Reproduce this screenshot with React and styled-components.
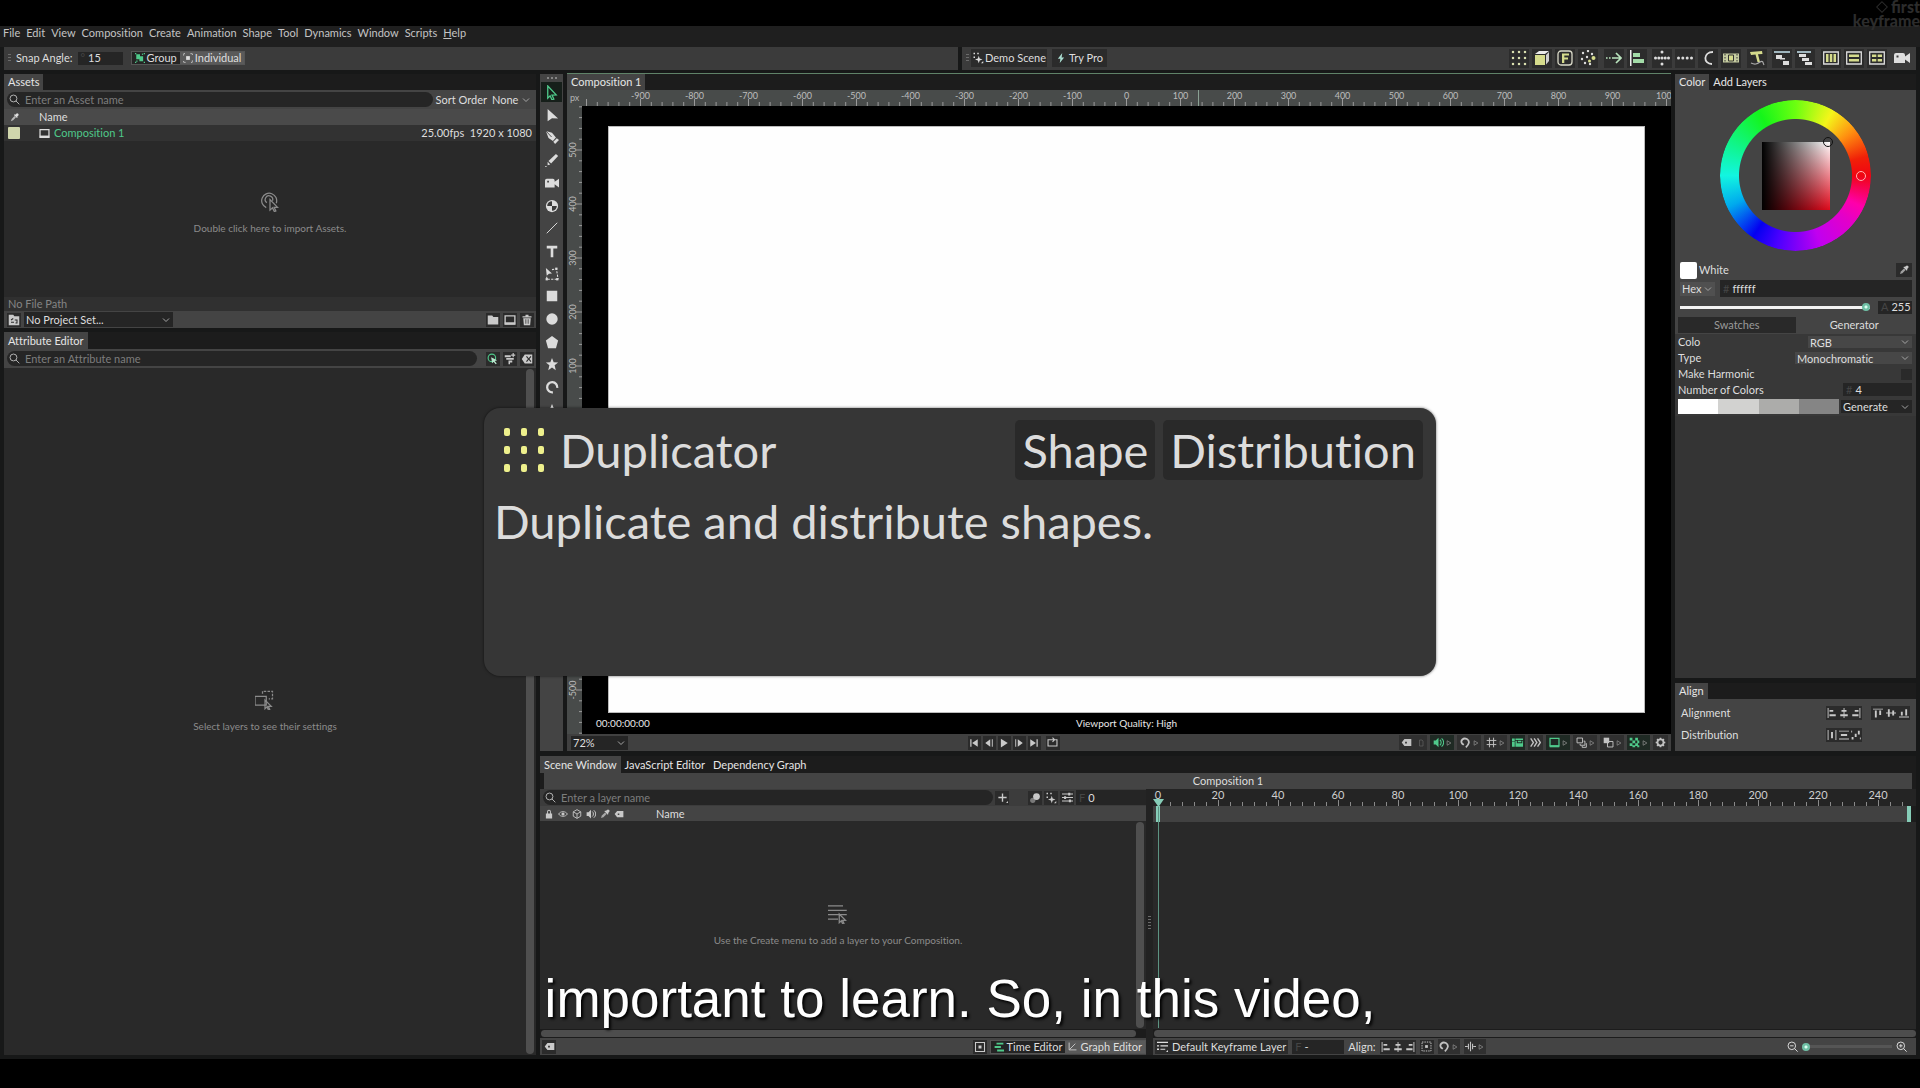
import React from "react";
import styled, { createGlobalStyle, css } from "styled-components";

const c = {
  window: "#171818",
  menu: "#1f1f1f",
  bar: "#3b3b3b",
  panel: "#444444",
  rail: "#1c1c1c",
  well: "#292929",
  field: "#252525",
  text: "#dedede",
  dim: "#8b8b8b",
  green: "#4fc98a",
  teal: "#86cdb8",
  lime: "#d5db8c",
};

const Global = createGlobalStyle`
  *, *::before, *::after { box-sizing: border-box; }
  body { margin: 0; background: #000; color: ${c.text}; font: 11px/14px Lato, "Liberation Sans", sans-serif; font-variant-ligatures: none; }
  button, input, select { font: inherit; color: inherit; margin: 0; padding: 0; border: 0; background: none; border-radius: 0; font-variant-ligatures: none; }
  h2, p { margin: 0; font: inherit; font-variant-ligatures: none; }
`;

/* ---------- frame ---------- */
const Stage = styled.div`
  position: relative;
  display: flex;
  flex-direction: column;
  min-height: 100vh;
  padding: 26px 0 29px;
  background: #000;
  overflow: hidden;
`;
const AppWindow = styled.div`
  flex: 1;
  display: flex;
  flex-direction: column;
  background: ${c.window};
`;
const MenuBar = styled.nav`
  display: flex;
  gap: 6px;
  height: 21px;
  padding: 0 3px;
  background: ${c.menu};
`;
const MenuItem = styled.button`
  color: #c4c4c4;
  line-height: 14px;
  height: 14px;
`;
const Toolbars = styled.div`
  display: flex;
  gap: 4px;
  padding: 0 4px;
`;
const Toolbar = styled.div`
  flex: 1;
  display: flex;
  align-items: center;
  height: 23px;
  padding: 0 4px 1px;
  background: ${c.bar};
`;
const Grip = styled.span`
  width: 3px;
  height: ${(p) => p.$h || 9}px;
  margin-right: ${(p) => p.$after || 0}px;
  background: repeating-linear-gradient(#6b6b6b 0 1px, transparent 1px 3px);
`;
const FieldLabel = styled.label`
  margin-right: ${(p) => p.$after || 0}px;
  white-space: nowrap;
`;
const NumberBox = styled.span`
  display: flex;
  align-items: center;
  gap: 3px;
  width: ${(p) => p.$w}px;
  height: ${(p) => p.$h || 13}px;
  padding-left: 3px;
  background: ${c.field};
  color: #454545;
  input { width: 100%; min-width: 0; color: ${c.text}; outline: 0; }
`;
const Segments = styled.div`
  display: flex;
  margin-left: ${(p) => p.$before || 0}px;
  border: 1px solid #555;
`;
const Segment = styled.button`
  display: flex;
  align-items: center;
  gap: ${(p) => p.$gap || 2}px;
  height: 12px;
  padding: 0 3px;
  white-space: nowrap;
  background: ${(p) => (p.$on ? "#242424" : "#5a5a5a")};
`;
const WordButton = styled.button`
  display: flex;
  align-items: center;
  gap: ${(p) => p.$gap || 1}px;
  height: ${(p) => p.$h || 18}px;
  padding: 0 ${(p) => p.$pad || 1}px;
  margin-right: ${(p) => p.$after || 0}px;
  white-space: nowrap;
  background: #2b2b2b;
`;
const ToolGroups = styled.div`
  display: flex;
  justify-content: space-between;
  width: 403px;
  margin-left: auto;
`;
const ToolGroup = styled.div`
  display: flex;
  gap: 3px;
`;
const ToolButton = styled.button`
  display: grid;
  place-items: center;
  width: 20px;
  height: 19px;
  background: ${(p) => (p.$bare ? "none" : "#2c2c2c")};
`;

/* ---------- panels ---------- */
const Workspace = styled.main`
  flex: 1;
  display: flex;
  gap: 4px;
  padding: 4px;
`;
const LeftColumn = styled.div`
  flex: none;
  display: flex;
  flex-direction: column;
  gap: 4px;
  width: 532px;
`;
const MainColumn = styled.div`
  flex: 1;
  min-width: 0;
  display: flex;
  flex-direction: column;
  gap: 5px;
`;
const Panel = styled.section`
  display: flex;
  flex-direction: column;
  min-width: 0;
  background: ${c.rail};
  ${(p) => p.$grow && css`flex: 1;`}
  ${(p) => p.$h && css`height: ${p.$h}px;`}
`;
const Tabs = styled.div`
  flex: none;
  display: flex;
  height: ${(p) => p.$h || 16}px;
  ${(p) => p.$accent && css`box-shadow: 0 -1px #5f8268;`}
`;
const Tab = styled.button`
  padding: 0 4px;
  line-height: 16px;
  white-space: nowrap;
  color: #e6e6e6;
  background: ${(p) => (p.$on ? c.panel : "none")};
`;
const Row = styled.div`
  flex: none;
  display: flex;
  align-items: center;
  height: ${(p) => p.$h}px;
  gap: ${(p) => p.$gap || 0}px;
  padding: 0 ${(p) => p.$right || 0}px 0 ${(p) => p.$left || 0}px;
  color: ${(p) => p.$tone || "inherit"};
  background: ${(p) => p.$bg || c.panel};
`;
const Search = styled.label`
  flex: 1;
  display: flex;
  align-items: center;
  gap: 5px;
  height: 15px;
  padding-left: 2px;
  border-radius: 8px;
  background: ${c.field};
  color: #b5b5b5;
  input { flex: 1; min-width: 0; outline: 0; }
  input::placeholder { color: #7d7d7d; opacity: 1; }
`;
const SelectWrap = styled.span`
  position: relative;
  display: flex;
  align-items: center;
  width: ${(p) => p.$w}px;
  height: ${(p) => p.$h || 13}px;
  background: ${(p) => p.$bg || c.field};
  margin-left: ${(p) => (p.$end ? "auto" : 0)};
  select { appearance: none; flex: 1; width: 100%; height: 100%; padding-left: 2px; outline: 0; }
  option { background: #333; }
  svg { position: absolute; right: 3px; pointer-events: none; color: #a5a5a5; }
`;
const MiniButton = styled.button`
  display: grid;
  place-items: center;
  flex: none;
  width: ${(p) => p.$w || 14}px;
  height: 14px;
  color: #c9c9c9;
  background: ${(p) => (p.$bare ? "none" : "#2b2b2b")};
`;
const Spacer = styled.span`
  flex: ${(p) => (p.$w ? "none" : 1)};
  width: ${(p) => p.$w || 0}px;
`;
const AssetTable = styled.table`
  width: 100%;
  border-collapse: collapse;
  table-layout: fixed;
  th, td { padding: 0; text-align: left; font-weight: 400; height: 16px; white-space: nowrap; }
  th { background: #4a4a4a; }
  td { background: #323232; }
  td:last-child { text-align: right; padding-right: 4px; }
  svg { display: block; }
`;
const HeadIcon = styled.span`
  display: block;
  padding-left: 6px;
`;
const AssetName = styled.span`
  display: flex;
  align-items: center;
  gap: 4px;
  color: ${c.green};
  svg { color: #ddd; }
`;
const ColorChip = styled.span`
  display: block;
  width: 12px;
  height: 12px;
  margin-left: 4px;
  border-radius: 1px;
  background: #d0d6ac;
`;
const AssetList = styled.div`
  flex: 1;
  display: flex;
  flex-direction: column;
`;
const Well = styled.div`
  flex: 1;
  display: flex;
  min-height: 0;
  background: ${(p) => p.$bg || c.well};
`;
const Empty = styled.div`
  flex: 1;
  display: flex;
  flex-direction: column;
  align-items: center;
  justify-content: center;
  gap: 9px;
  padding-bottom: ${(p) => p.$lift || 0}px;
  font-size: 10px;
  color: ${c.dim};
`;
const ScrollY = styled.div`
  width: 8px;
  margin: 1px 2px 1px 0;
  border-radius: 4px;
  background: #4f4f4f;
`;
const ScrollX = styled.div`
  flex: none;
  height: 7px;
  margin: 1px ${(p) => p.$right || 0}px 1px 1px;
  border-radius: 4px;
  background: #4d4d4d;
`;

/* ---------- middle ---------- */
const Upper = styled.div`
  flex: 1;
  display: flex;
  gap: 4px;
`;
const ToolStrip = styled.div`
  flex: none;
  width: 23px;
  padding-top: 3px;
  background: ${c.panel};
`;
const StripGrip = styled.div`
  width: 10px;
  height: 2px;
  margin: 0 auto 3px;
  background: repeating-linear-gradient(90deg, #858585 0 2px, transparent 2px 4px);
`;
const StripTools = styled.div`
  display: flex;
  flex-direction: column;
  justify-content: space-between;
  align-items: center;
  height: 338px;
`;
const StripButton = styled.button`
  display: grid;
  place-items: center;
  width: 21px;
  height: 20px;
  color: ${(p) => (p.$on ? c.green : "#dcdcdc")};
  background: ${(p) => (p.$on ? "#161f1a" : "none")};
`;
const ViewGrid = styled.div`
  flex: 1;
  display: grid;
  grid-template: 16px 1fr / 15px 1fr;
  min-height: 0;
  background: #484b4a;
  svg { display: block; }
`;
const Corner = styled.span`
  font-size: 9px;
  line-height: 16px;
  padding-left: 3px;
  color: #b5b5b5;
`;
const RulerSvg = styled.svg`
  width: 100%;
  height: 100%;
  overflow: hidden;
  text { font-size: 9px; fill: #bdbdbd; text-anchor: middle; }
`;
const View = styled.div`
  display: flex;
  flex-direction: column;
  padding: 20px 26px 0;
  background: #000;
`;
const Canvas = styled.div`
  flex: 1;
  background: #fefefe;
  border: 1px solid #bbb;
`;
const ViewStatus = styled.div`
  display: grid;
  grid-template-columns: 1fr auto 1fr;
  height: 21px;
  margin: 0 -12px;
  font-size: 10px;
  line-height: 21px;
  color: #e8e8e8;
`;
const Transport = styled.div`
  display: flex;
  gap: 2px;
`;
const ViewControls = styled.div`
  display: flex;
  justify-content: space-between;
  align-items: center;
  height: 17px;
  padding: 0 3px 0 4px;
  background: #404040;
`;
const Toggles = styled.div`
  display: flex;
  justify-content: flex-end;
  gap: 3px;
`;
const ToggleButton = styled.button`
  display: flex;
  align-items: center;
  justify-content: center;
  gap: ${(p) => p.$gap || 2}px;
  width: ${(p) => p.$w || 15}px;
  height: 15px;
  color: ${(p) => (p.$on ? c.green : "#c2c2c2")};
  background: ${(p) => (p.$on ? "#1f2a24" : "#303030")};
  svg + svg { color: #8d8d8d; }
`;

/* ---------- right column ---------- */
const Inspector = styled.div`
  flex: none;
  display: flex;
  flex-direction: column;
  gap: 5px;
  width: 241px;
`;
const WheelArea = styled.div`
  display: grid;
  place-items: center;
  height: 171px;
  background: ${c.panel};
`;
const Wheel = styled.div`
  position: relative;
  display: grid;
  place-items: center;
  width: 151px;
  height: 151px;
`;
const Hue = styled.div`
  grid-area: 1 / 1;
  width: 151px;
  height: 151px;
  border-radius: 50%;
  background: conic-gradient(from 90deg, #f00512, #f0a 25deg, #e400c8 40deg, #c000f0 70deg, #4a00ff 105deg, #0400f0 125deg, #0ae 155deg, #12f5e0 180deg, #10f590 205deg, #14f51a 240deg, #6bff10 270deg, #f4f51a 300deg, #ff9010 322deg, #f02008 345deg, #f00512);
  mask: radial-gradient(circle, transparent 56px, #000 57px);
`;
const Shade = styled.div`
  grid-area: 1 / 1;
  width: 68px;
  height: 68px;
  background: linear-gradient(90deg, #000, transparent), linear-gradient(#fff, #e00a1c);
`;
const Marker = styled.span`
  position: absolute;
  left: ${(p) => p.$x}px;
  top: ${(p) => p.$y}px;
  width: 10px;
  height: 10px;
  border: 1px solid ${(p) => p.$tone};
  border-radius: 50%;
`;
const WhiteSwatch = styled.span`
  width: 17px;
  height: 17px;
  border-radius: 2px;
  background: #fff;
`;
const Range = styled.input`
  appearance: none;
  flex: ${(p) => (p.$w ? "none" : 1)};
  width: ${(p) => p.$w || 100}px;
  min-width: 0;
  height: 10px;
  outline: 0;
  background: linear-gradient(${(p) => p.$track}, ${(p) => p.$track}) center / 100% 3px no-repeat;
  &::-webkit-slider-thumb {
    appearance: none;
    width: 8px;
    height: 8px;
    border-radius: 50%;
    background: radial-gradient(circle, #d8fff0 1px, #6fbfa5 2px);
  }
`;
const HalfTab = styled.button`
  flex: 1;
  height: 16px;
  color: ${(p) => (p.$on ? "#dcdcdc" : "#9a9a9a")};
  background: ${(p) => (p.$on ? c.panel : "#292929")};
`;
const Check = styled.input`
  appearance: none;
  width: 11px;
  height: 11px;
  margin-left: auto;
  background: #2a2a2a;
`;
const Palette = styled.div`
  display: flex;
  flex: 1;
  height: 15px;
`;
const PaletteColor = styled.span`
  flex: 1;
  background: ${(p) => p.$color};
`;
const IconSet = styled.div`
  display: flex;
  margin-left: ${(p) => p.$before || 0}px;
  background: #262626;
`;
const AlignName = styled.span`
  width: 145px;
`;

/* ---------- scene ---------- */
const SceneTitle = styled.div`
  flex: none;
  height: 16px;
  margin: 0 4px;
  line-height: 16px;
  text-align: center;
  background: ${c.panel};
`;
const SceneSplit = styled.div`
  flex: 1;
  display: flex;
  min-height: 0;
`;
const Layers = styled.div`
  flex: none;
  display: flex;
  flex-direction: column;
  width: 606px;
`;
const Splitter = styled.div`
  display: grid;
  place-items: center;
  flex: none;
  width: 7px;
  background: #222;
`;
const Timeline = styled.div`
  position: relative;
  flex: 1;
  min-width: 0;
  display: flex;
  flex-direction: column;
`;
const TimeRuler = styled.div`
  flex: none;
  height: 17px;
  background: #242424;
  svg { display: block; }
  text { font-size: 11px; fill: #cfcfcf; }
`;
const WorkArea = styled.div`
  flex: none;
  display: flex;
  justify-content: space-between;
  height: 16px;
  margin-right: 5px;
  padding-left: 3px;
  background: #414141;
`;
const Handle = styled.span`
  width: 4px;
  background: ${c.teal};
`;
const Playhead = styled.div`
  position: absolute;
  left: 5px;
  top: 16px;
  bottom: 27px;
  width: 1px;
  background: #5d9382;
`;
const PlayheadTip = styled.span`
  position: absolute;
  left: 0;
  top: 10px;
  width: 11px;
  height: 8px;
  background: ${c.teal};
  clip-path: polygon(0 0, 100% 0, 50% 100%);
`;

/* ---------- overlays ---------- */
const Card = styled.aside`
  position: absolute;
  top: 408px;
  left: 50%;
  transform: translateX(-50%);
  width: 952px;
  height: 268px;
  padding: 12px 13px 0 10px;
  border-radius: 16px;
  background: #363636;
  box-shadow: 0 0 3px rgba(0, 0, 0, 0.6);
  color: #dcdcdc;
  font-size: 47px;
  line-height: 60px;
`;
const CardHead = styled.div`
  display: flex;
  align-items: center;
  gap: 8px;
  svg { margin: 0 6px 0 8px; }
`;
const CardTitle = styled.h2`
  flex: 1;
`;
const Tag = styled.span`
  padding: 0 7px;
  border-radius: 5px;
  background: #292929;
`;
const CardText = styled.p`
  margin-top: 11px;
`;
const Caption = styled.p`
  position: absolute;
  left: 0;
  right: 0;
  bottom: 59px;
  text-align: center;
  font: 53px/60px "Liberation Sans", Arial, sans-serif;
  color: #fff;
  text-shadow: 2px 2px 3px #000;
  pointer-events: none;
`;
const Watermark = styled.div`
  position: absolute;
  top: 0;
  right: 0;
  display: grid;
  justify-items: end;
  font: 900 16px/14px Lato, sans-serif;
  color: #2c2c2c;
`;
const WatermarkLine = styled.span`
  display: flex;
  align-items: center;
  gap: 3px;
`;

/* ---------- icons, drawn on a 16 unit grid ---------- */
const L = c.lime;
const S = { fill: "none", stroke: "currentColor", strokeWidth: 1.4 };
const dots = (pts, r = 1, fill) => pts.map(([x, y]) => <rect key={`${x}-${y}`} x={x - r} y={y - r} width={r * 2} height={r * 2} fill={fill} />);
const nine = [2, 8, 14].flatMap((y) => [2, 8, 14].map((x) => [x, y]));
const art = {
  search: <g {...S}><circle cx="6.5" cy="6.5" r="5" /><path d="M10 10l5 5" /></g>,
  dropper: <g><path d="M14.5 1.5a2.4 2.4 0 00-3.4 0L9.3 3.3 8.3 2.3 7 3.600l5.400 5.400 1.300-1.300-1-1 1.800-1.800a2.400 2.400 0 000-3.400z" /><path d="M8 5.500L3 10.500 1.500 14.500 5.500 13l5-5z" opacity=".75" /></g>,
  chevron: <path d="M2 5l6 6 6-6" {...S} strokeWidth="2" />,
  comp: <g><path d="M1.500 2.500h13v11h-13z" {...S} strokeWidth="1.800" /><path d="M1 11h14v3H1z" /></g>,
  folder: <path d="M1 2h6l1.500 2H15v10H1z" />,
  project: <g><path d="M1 1h6l1.500 2H15v12H1z" /><path d="M4 8l3-2M4 11h4M9 8h3v4h-2" stroke="#2b2b2b" fill="none" strokeWidth="1.400" /></g>,
  trash: <g><path d="M2 3h12v1.600H2zM6 1h4v2H6z" /><path d="M3 5.500h10L12.200 15H3.800zM6 7v6h1V7zM9 7v6h1V7z" fillRule="evenodd" /></g>,
  click: <g><circle cx="6.500" cy="6.500" r="5" fill="none" stroke={c.green} strokeWidth="1.500" /><path d="M5.500 5.500l8 4-3.200 1 2.700 3.500-1.500 1-2.600-3.500-2 2z" fill="#b9e6ce" /></g>,
  filterAdd: <path d="M1 3h8v2.500H1zM3 6.500h10V9H3zM6 10h5v2.500H8V15H6zM11.500 0H13v5.500h-1.500zM9.500 2H15v1.500H9.500z" />,
  clear: <path d="M5 2h10v12H5L1 8zm1.700 3l2.600 3-2.600 3 1.200 1 2.400-2.900L12.700 12l1.100-1-2.500-3 2.500-3-1.100-1-2.400 2.900L7.900 4z" fillRule="evenodd" />,
  tag: <path d="M5 3h10v10H5L1 8zm1 4v2.500h2.500V7z" fillRule="evenodd" />,
  slot: <path d="M5 2h5l2 2v10H5z" fill="none" stroke="#626262" strokeWidth="1.400" />,
  groupMode: <g fill={c.green}><path d="M2 2h6v3h5v8H7v-3H2z" />{dots([[1, 1], [15, 1], [1, 15], [15, 15], [12, 2], [3, 13]], 1, c.green)}</g>,
  single: <g><path d="M5 5h6v6H5z" /><path d="M1 4V1h3M12 1h3v3M15 12v3h-3M4 15H1v-3" {...S} strokeDasharray="2 1" /></g>,
  spark: <g>{dots([[3, 2], [8, 2], [3, 7]], 1)}<path d="M9 5l1.200 3.800L14 10l-3.800 1.200L9 15l-1.200-3.800L4 10l3.800-1.200z" /><path d="M12 15h3v-3z" /></g>,
  bolt: <path d="M10 0L3 9h4l-1 7 7-9H9z" fill="#a9dcd0" />,
  dupe: <g>{dots(nine, 1.100, "#d9dfaf")}</g>,
  cube: <g><path d="M1 5h10v10H1z" fill={L} /><path d="M1 4l4-3h10l-4 3z" fill="#e9e9e9" /><path d="M12 5l3-3v9l-3 3.500z" fill="#cfcfcf" /></g>,
  forge: <g><rect x="1" y="1" width="14" height="14" rx="3" fill="none" stroke="#d9d9c8" strokeWidth="1.300" /><path d="M5 3.500h7v2H7.300v2H11v2H7.300V13H5z" fill={L} /></g>,
  scatter: <g fill="#ddd">{[[3, 3], [8, 1], [2, 9], [7, 7], [5, 13], [12, 4], [10, 14]].map(([x, y]) => <circle key={x} cx={x} cy={y} r="1.200" />)}<circle cx="13.500" cy="8" r="2" fill={L} /><circle cx="9.500" cy="11" r="1.500" fill={L} /></g>,
  arrow: <g fill="none" stroke="#b9e3bd" strokeWidth="1.700"><path d="M0 8h6" strokeDasharray="1.600 1.400" /><path d="M6 8h8M10 3l5 5-5 5" /></g>,
  bars: <g><path d="M1 0h1.500v16H1z" fill="#eee" /><path d="M4 3h7v4H4zM4 9h11v4H4z" fill="#a3dca8" /></g>,
  cross: <g fill="#ddd">{[[8, 2], [8, 14], [1.500, 8], [14.500, 8], [8, 8], [4.800, 8], [11.200, 8]].map(([x, y]) => <circle key={`${x}-${y}`} cx={x} cy={y} r="1.500" />)}</g>,
  ellipsis: <g fill="#ddd">{[1.500, 5.800, 10.200, 14.500].map((x) => <circle key={x} cx={x} cy="8" r="1.500" />)}</g>,
  arc: <path d="M13 2C3 2 3 14 12 14" fill="none" stroke="#ddd" strokeWidth="1.800" />,
  strip: <g><path d="M0 3.500h16v9H0z" fill="#c5cba0" /><path d="M5.500 5h5v6h-5z" fill={L} stroke="#333" /><path d="M2 4v8M14 4v8" stroke="#333" strokeDasharray="1.500 1.500" /></g>,
  textPath: <g><path d="M1 2l12-1 .5 3-4.500.3L11 12H8.500L6.500 4.600 2 5z" fill={L} /><path d="M2 13c4 2 6 1 9-1s3 1 4 3" fill="none" stroke="#aaa" strokeWidth="1.200" /></g>,
  stagger: <g><path d="M0 1h16v2H0z" fill="#9fb5bd" /><path d="M2 5h6v4H2zM9 11h6v4H9zM6 8h5v1.500H6z" fill="#ddd" /></g>,
  stairs: <g><path d="M0 1h14v2H0z" fill="#9fb5bd" /><path d="M2 4h7v3H2zM5 8h7v3H5zM8 12h7v3H8z" fill="#ddd" /></g>,
  cols: <g><path d="M.7 2h14.600v12H.7z" fill="none" stroke="#ddd" strokeWidth="1.300" /><path d="M3 4h2.500v8H3zM6.800 4h2.500v8H6.800zM10.500 4H13v8h-2.500z" fill={L} /></g>,
  rows: <g><path d="M.7 2h14.600v12H.7z" fill="none" stroke="#ddd" strokeWidth="1.300" /><path d="M3 4.500h10V7H3zM3 9h10v2.500H3z" fill={L} /></g>,
  grid: <g><path d="M.7 2h14.600v12H.7z" fill="none" stroke="#ddd" strokeWidth="1.300" /><path d="M3 4.500h4.300V7H3zM3 9h4.300v2.500H3zM8.700 4.500H13V7H8.700zM8.700 9H13v2.500H8.700z" fill={L} /></g>,
  camera: <path d="M0 5a2 2 0 012-2h7a2 2 0 012 2v1.500L16 3v10l-5-3.500V13H0zM2.500 5.500v2h2v-2z" fillRule="evenodd" />,
  pick: <path d="M4 1l9 9.500-4.500.3L10.500 15l-2 .8L6.500 11.500 4 14z" {...S} />,
  direct: <path d="M3 1l12 11-7-.3L3 15z" />,
  pen: <g><path d="M1 1l7 2 4.500 5.500-3.500 4L4 9z" /><path d="M1 1l6.500 7" stroke="#444" strokeWidth="1" /><path d="M13.500 9.500l2.500 2-4.500 4.500-2-2.500z" /></g>,
  pencil: <g><path d="M12.500 1L15 3.500 7 12l-3-3z" /><path d="M3 10l3 3-3 1zM0 15h2v1H0z" /></g>,
  pie: <g><circle cx="8" cy="8" r="7" /><path d="M8 2.500V8H2.500A5.500 5.500 0 018 2.500zM8 13.500V8h5.500A5.500 5.500 0 018 13.500z" fill="#3a3a3a" /></g>,
  line: <path d="M2 14L14 2" {...S} strokeWidth="1.100" />,
  type: <path d="M2 2h12v3H9.500v10h-3V5H2z" />,
  lasso: <g><path d="M1 1l7 6.500-3.500.2L2 10z" /><path d="M8 3l5-1 2 12M2 11v3h12" {...S} strokeDasharray="2.500 1.500" strokeWidth="1.200" />{dots([[13, 2], [2, 14], [14, 14]], 1.300)}</g>,
  square: <path d="M2 2h12v12H2z" />,
  disc: <circle cx="8" cy="8" r="6.500" />,
  pentagon: <path d="M8 1l7 5.300L12.500 15h-9L1 6.300z" />,
  star: <path d="M8 1l1.900 4.900L15 6.200l-4 3.300L12.300 15 8 12l-4.300 3L5 9.500 1 6.200l5.100-.3z" />,
  ring: <path d="M9 14A5.800 5.800 0 1114 9" fill="none" stroke="currentColor" strokeWidth="2.600" />,
  flare: <path d="M8 1l2 5 5 2-5 2-2 5-2-5-5-2 5-2z" />,
  first: <path d="M2 2h2v12H2zM14 2v12L5 8z" />,
  back: <path d="M12.500 2H14v12h-1.500zM10 2v12L2 8z" />,
  play: <path d="M3 1l11 7-11 7z" />,
  fwd: <path d="M2 2h1.500v12H2zM6 2v12l8-6z" />,
  last: <path d="M12 2h2v12h-2zM2 2v12l9-6z" />,
  loop: <path d="M5 4H1.500v9h13V4H12M5 4h5M8 1l3 3-3 3" {...S} strokeWidth="1.600" />,
  tri: <path d="M3 2l10 6-10 6z" {...S} strokeWidth="2" />,
  sound: <g><path d="M1 5h3l4-4v14l-4-4H1z" /><path d="M10 4c2.500 2 2.500 6 0 8M12.500 2c4 3.500 4 8.500 0 12" {...S} strokeWidth="1.600" /></g>,
  magnet: <g><path d="M5.500 11.500L3 9.500C0 5 5 .5 10 3c5 3 3 8-1.500 12" fill="none" stroke="currentColor" strokeWidth="2.600" /></g>,
  hash: <path d="M5 1v14M11 1v14M1 5h14M1 11h14" {...S} />,
  overlay: <path d="M0 2h4v4H0zM5 2h11v2.500H5zM0 7h4v7H0zM5 5.500h2V9h8V5.500h1V14H5zM8.500 5.500h5v2h-5z" />,
  fast: <path d="M1 2l4 6-4 6M6 2l4 6-4 6M11 2l4 6-4 6" {...S} strokeWidth="2" />,
  frame: <g><path d="M1.500 2h13v11h-13z" {...S} strokeWidth="1.800" /><path d="M1 12h14v3H1z" /></g>,
  layers: <g><path d="M1.500 1.500h8v7h-8z" {...S} /><path d="M6 10v2h7V6h-2M9 13v2h6V9" {...S} /></g>,
  mask: <g><path d="M1 1h8v8H1z" /><path d="M6.500 6.500h8v8h-8z" {...S} /></g>,
  checker: <path d="M1 1h4v4H1zM9 1h4v4H9zM5 5h4v4H5zM12 5h3v4h-3zM1 9h4v4H1zM9 9h4v4H9zM5 12h4v3H5zM12 12h3v3h-3z" />,
  gear: <g><circle cx="8" cy="8" r="4.400" fill="none" stroke="currentColor" strokeWidth="2.600" /><path d="M8 1v2M8 13v2M1 8h2M13 8h2M3 3l1.500 1.500M11.500 11.500L13 13M3 13l1.500-1.500M11.500 4.500L13 3" {...S} strokeWidth="2.400" /></g>,
  plus: <g><path d="M7 2h2v5h5v2H9v5H7V9H2V7h5z" /><path d="M13 16h3v-3z" /></g>,
  blur: <g><circle cx="10" cy="6" r="4.500" /><circle cx="5" cy="11" r="3.500" opacity=".5" /></g>,
  sliders: <g><path d="M0 3h16M0 8h16M0 13h16" {...S} strokeWidth="1.600" /><path d="M9 1h3v4H9zM3 6h3v4H3zM10 11h3v4h-3z" /></g>,
  lock: <path d="M3 7h10v8H3zM5 7V4a3 3 0 016 0v3H9.600V4.500a1.600 1.600 0 00-3.200 0V7z" />,
  eye: <g><path d="M1 8c3-5 11-5 14 0-3 5-11 5-14 0z" {...S} /><circle cx="8" cy="8" r="2.500" /></g>,
  box: <path d="M8 1l6 3.500v7L8 15l-6-3.500v-7zM2 4.500L8 8l6-3.500M8 8v7" {...S} />,
  dotbox: <g><path d="M2 2h12v12H2z" {...S} /><path d="M6 6h4v4H6z" /></g>,
  timeBars: <path d="M4 1h11v3H4zM1 6.500h10v3H1zM5 12h11v3H5z" fill={c.green} />,
  graph: <path d="M2 1v13h13M3 13L13 3" {...S} />,
  keyLayer: <g><path d="M0 2h16M5 7h11M5 12h7" {...S} strokeWidth="1.800" /><path d="M0 6h3v2H0zM0 11h3v2H0zM13 16h3v-3z" /></g>,
  alignL: <path d="M1 0h1.500v16H1zM4 3h6v3H4zM4 10h10v3H4z" />,
  alignC: <path d="M7.300 0h1.500v16H7.300zM4 3h8v3H4zM2 10h12v3H2z" />,
  alignR: <path d="M13.500 0H15v16h-1.500zM6 3h6v3H6zM2 10h10v3H2z" />,
  alignT: <path d="M0 1h16v1.500H0zM3 4h3v11H3zM10 4h3v7h-3z" />,
  alignM: <path d="M0 7.300h16v1.500H0zM3 2h3v12H3zM10 4h3v8h-3z" />,
  alignB: <path d="M0 13.500h16V15H0zM10 2h3v10h-3zM3 6h3v6H3z" />,
  distH: <path d="M1 0h1.500v16H1zM13.500 0H15v16h-1.500zM6.500 3h3v10h-3z" />,
  distV: <path d="M0 1h16v1.500H0zM0 13.500h16V15H0zM3 6.500h10v3H3z" />,
  distD: <g><path d="M1 1v3M15 12v3" {...S} /><path d="M1 11h3v4H1zM6 6h3v5H6zM11 1h3v6h-3z" /></g>,
  bounds: <g><path d="M1.500 1.500h13v13h-13z" {...S} strokeDasharray="2 1.500" /><path d="M6 6h4v4H6z" /></g>,
  ripple: <path d="M0 8h4M5 4v8M8 1v14M11 4v8M12 8h4" {...S} strokeWidth="1.600" />,
  zoomOut: <g {...S}><circle cx="7" cy="7" r="5.500" /><path d="M11 11l4.500 4.500M4.500 7h5" /></g>,
  zoomIn: <g {...S}><circle cx="7" cy="7" r="5.500" /><path d="M11 11l4.500 4.500M4.500 7h5M7 4.500v5" /></g>,
  clickHere: <g {...S} strokeWidth="1"><path d="M5 12.500A6 6 0 1113 9" /><path d="M5.500 8.500A3 3 0 1110 7" /><path d="M8 6v8.500l2-1.800 1.500 3 1.200-.6-1.400-2.900H14z" /></g>,
  selectHere: <g {...S} strokeWidth="1"><path d="M0 5h9v7H0z" /><path d="M6 3V1h8v6h-3" strokeDasharray="2 1" /><path d="M8 8v7l1.600-1.500 1.200 2.500 1-.5-1.200-2.400H13z" /></g>,
  listHere: <g {...S} strokeWidth="1"><path d="M0 1.500h12M0 5h15M0 8.500h15M0 12h8" /><path d="M9 8v7l1.600-1.500 1.200 2.500 1-.5-1.200-2.400H14z" /></g>,
  diamond: <path d="M8 1l7 7-7 7-7-7z" {...S} />,
};
const Icon = ({ n, s = 12 }) => (
  <svg width={s} height={s} viewBox="0 0 16 16" fill="currentColor" aria-hidden="true">{art[n]}</svg>
);

/* ---------- rulers ---------- */
const SCALE = 0.54;
const steps = Array.from({ length: 103 }, (_, i) => (i - 51) * 20);
const RulerX = () => (
  <RulerSvg>
    <svg x="50%" overflow="visible">
      {steps.map((v) => (
        <path key={v} d={`M${v * SCALE} ${v % 100 ? 12 : 9}V16`} stroke="#9a9a9a" />
      ))}
      {steps.filter((v) => v % 100 === 0 && v > -1000).map((v) => (
        <text key={v} x={v * SCALE} y="9">{v}</text>
      ))}
      <path d="M72 0V16" stroke="#8aa193" />
    </svg>
  </RulerSvg>
);
const RulerY = () => (
  <RulerSvg>
    <svg y="50%" overflow="visible">
      {steps.filter((v) => Math.abs(v) < 600).map((v) => (
        <path key={v} d={`M${v % 100 ? 12 : 9} ${-v * SCALE}H15`} stroke="#9a9a9a" />
      ))}
      {steps.filter((v) => v % 100 === 0 && Math.abs(v) < 600).map((v) => (
        <text key={v} transform={`translate(9 ${-v * SCALE}) rotate(-90)`}>{v}</text>
      ))}
    </svg>
  </RulerSvg>
);
const frames = Array.from({ length: 63 }, (_, i) => i * 4);
const FrameRuler = () => (
  <TimeRuler>
    <svg width="100%" height="17">
      {frames.map((f) => (
        <path key={f} d={`M${f * 3 + 5.5} ${f % 20 ? 13 : 11}V17`} stroke="#8a8a8a" />
      ))}
      {frames.filter((f) => f % 20 === 0).map((f) => (
        <text key={f} x={f * 3 + 5} y="10" textAnchor="middle">{f}</text>
      ))}
    </svg>
  </TimeRuler>
);

const Select = ({ id, label, value, ...rest }) => (
  <SelectWrap {...rest}>
    <select id={id} aria-label={label} defaultValue={value}><option>{value}</option></select>
    <Icon n="chevron" s={8} />
  </SelectWrap>
);
const IconButtons = ({ names, w, before }) => (
  <IconSet $before={before}>
    {names.map((n) => <MiniButton key={n} aria-label={n} $w={w}><Icon n={n} s={10} /></MiniButton>)}
  </IconSet>
);

const menus = ["File", "Edit", "View", "Composition", "Create", "Animation", "Shape", "Tool", "Dynamics", "Window", "Scripts"];
const toolGroups = [["dupe", "cube", "forge", "scatter"], ["arrow", "bars"], ["cross", "ellipsis", "arc", "strip"], ["textPath"], ["stagger", "stairs"], ["cols", "rows", "grid"], ["camera"]];
const stripTools = ["pick", "direct", "pen", "pencil", "camera", "pie", "line", "type", "lasso", "square", "disc", "pentagon", "star", "ring", "flare"];
const toggles = [
  { n: "sound", on: true, w: 24 },
  { n: "magnet", w: 24 },
  { n: "hash", w: 23 },
  { n: "overlay", on: true },
  { n: "fast" },
  { n: "frame", on: true, w: 24 },
  { n: "layers", w: 24 },
  { n: "mask", w: 24 },
  { n: "checker", on: true, w: 23 },
  { n: "gear" },
];
const generated = ["#fff", "#d2d2d0", "#acacaa", "#858585"];
const lower = "#383838";

export default function App() {
  return (
    <Stage>
      <Global />
      <AppWindow>
        <MenuBar>
          {menus.map((m) => <MenuItem key={m}>{m}</MenuItem>)}
          <MenuItem><u>H</u>elp</MenuItem>
        </MenuBar>
        <Toolbars>
          <Toolbar>
            <Grip $after={5} />
            <FieldLabel htmlFor="snap" $after={5}>Snap Angle:</FieldLabel>
            <NumberBox $w={45}>{"\u00b0"}<input id="snap" defaultValue="15" /></NumberBox>
            <Segments $before={8}>
              <Segment $on><Icon n="groupMode" s={10} />Group</Segment>
              <Segment><Icon n="single" s={10} />Individual</Segment>
            </Segments>
          </Toolbar>
          <Toolbar>
            <Grip $after={2} />
            <WordButton $after={5}><Icon n="spark" />Demo Scene</WordButton>
            <WordButton $pad={4} $gap={3}><Icon n="bolt" s={10} />Try Pro</WordButton>
            <ToolGroups>
              {toolGroups.map((g) => (
                <ToolGroup key={g[0]}>
                  {g.map((n) => <ToolButton key={n} aria-label={n} $bare={n === "camera"}><Icon n={n} s={16} /></ToolButton>)}
                </ToolGroup>
              ))}
            </ToolGroups>
          </Toolbar>
        </Toolbars>

        <Workspace>
          <LeftColumn>
            <Panel $h={254}>
              <Tabs><Tab $on>Assets</Tab></Tabs>
              <Row $h={19} $left={3} $right={3} $gap={3}>
                <Search><Icon n="search" s={11} /><input placeholder="Enter an Asset name" aria-label="Asset name" /></Search>
                <FieldLabel htmlFor="sort">Sort Order</FieldLabel>
                <Select id="sort" value="None" $w={43} $bg="transparent" />
              </Row>
              <AssetList>
                <AssetTable>
                  <colgroup><col width="35" /><col /><col width="130" /></colgroup>
                  <thead>
                    <tr><th aria-label="Label colour"><HeadIcon><Icon n="dropper" s={9} /></HeadIcon></th><th>Name</th><th aria-label="Details" /></tr>
                  </thead>
                  <tbody>
                    <tr><td><ColorChip /></td><td><AssetName><Icon n="comp" s={11} />Composition 1</AssetName></td><td>25.00fps&nbsp; 1920 x 1080</td></tr>
                  </tbody>
                </AssetTable>
                <Well><Empty $lift={11}><Icon n="clickHere" s={20} />Double click here to import Assets.</Empty></Well>
              </AssetList>
              <Row $h={14} $left={4} $bg="#303030" $tone="#858585">No File Path</Row>
              <Row $h={17} $left={3} $right={2} $gap={3}>
                <MiniButton aria-label="Project"><Icon n="project" /></MiniButton>
                <Select label="Project" value="No Project Set..." $w={149} $h={15} />
                <Spacer />
                <MiniButton aria-label="New folder"><Icon n="folder" /></MiniButton>
                <MiniButton aria-label="New composition"><Icon n="comp" /></MiniButton>
                <MiniButton aria-label="Delete"><Icon n="trash" /></MiniButton>
              </Row>
            </Panel>
            <Panel $grow>
              <Tabs $h={17}><Tab $on>Attribute Editor</Tab></Tabs>
              <Row $h={19} $left={3} $right={2} $gap={3}>
                <Search><Icon n="search" s={11} /><input placeholder="Enter an Attribute name" aria-label="Attribute name" /></Search>
                <Spacer $w={3} />
                <MiniButton aria-label="Follow selection"><Icon n="click" /></MiniButton>
                <MiniButton aria-label="Add filter"><Icon n="filterAdd" /></MiniButton>
                <MiniButton aria-label="Clear"><Icon n="clear" /></MiniButton>
              </Row>
              <Well>
                <Empty><Icon n="selectHere" s={20} />Select layers to see their settings</Empty>
                <ScrollY />
              </Well>
            </Panel>
          </LeftColumn>

          <MainColumn>
            <Upper>
              <ToolStrip>
                <StripGrip />
                <StripTools>
                  {stripTools.map((n, i) => <StripButton key={n} aria-label={n} $on={i === 0}><Icon n={n} s={i ? 14 : 15} /></StripButton>)}
                </StripTools>
              </ToolStrip>
              <Panel $grow>
                <Tabs $accent><Tab $on>Composition 1</Tab></Tabs>
                <ViewGrid>
                  <Corner>px</Corner>
                  <RulerX />
                  <RulerY />
                  <View>
                    <Canvas />
                    <ViewStatus><span>00:00:00:00</span><span>Viewport Quality: High</span></ViewStatus>
                  </View>
                </ViewGrid>
                <ViewControls>
                  <Select label="Zoom" value="72%" $w={57} $h={14} />
                  <Transport>
                    {["first", "back", "play", "fwd", "last"].map((n) => <MiniButton key={n} aria-label={n} $w={13}><Icon n={n} s={10} /></MiniButton>)}
                    <Spacer $w={1} />
                    <MiniButton aria-label="loop"><Icon n="loop" s={11} /></MiniButton>
                  </Transport>
                  <Toggles>
                    <ToggleButton $w={28} $gap={5} aria-label="Tags"><Icon n="tag" s={11} /><Icon n="slot" s={8} /></ToggleButton>
                    {toggles.map(({ n, on, w }) => (
                      <ToggleButton key={n} aria-label={n} $on={on} $w={w}>
                        <Icon n={n} s={11} />{w && <Icon n="tri" s={6} />}
                      </ToggleButton>
                    ))}
                  </Toggles>
                </ViewControls>
              </Panel>
              <Inspector>
                <Panel $grow>
                  <Tabs><Tab $on>Color</Tab><Tab>Add Layers</Tab></Tabs>
                  <WheelArea>
                    <Wheel>
                      <Hue /><Shade />
                      <Marker $x={103} $y={37} $tone="#111" />
                      <Marker $x={136} $y={71} $tone="#ffb0b0" />
                    </Wheel>
                  </WheelArea>
                  <Row $h={18} $left={5} $right={4} $gap={2}>
                    <WhiteSwatch />White<Spacer />
                    <MiniButton aria-label="Pick colour" $w={16}><Icon n="dropper" s={10} /></MiniButton>
                  </Row>
                  <Row $h={19} $left={5} $right={4} $gap={5}>
                    <Select label="Colour format" value="Hex" $w={35} $h={14} $bg="#505050" />
                    <NumberBox $w={192} $h={17}>#<input aria-label="Hex value" defaultValue="ffffff" /></NumberBox>
                  </Row>
                  <Row $h={18} $left={5} $right={4} $gap={8}>
                    <Range type="range" aria-label="Alpha" min="0" max="255" defaultValue="255" $track="#f4f4f4" />
                    <NumberBox $w={34}>A<input aria-label="Alpha value" defaultValue="255" /></NumberBox>
                  </Row>
                  <Row $h={18} $left={3} $right={3}><HalfTab>Swatches</HalfTab><HalfTab $on>Generator</HalfTab></Row>
                  <Row $h={16} $left={3} $right={4} $bg={lower}>Colo<Select label="Colour space" value="RGB" $w={104} $h={12} $bg="#474747" $end /></Row>
                  <Row $h={16} $left={3} $right={4} $bg={lower}>Type<Select label="Type" value="Monochromatic" $w={117} $h={12} $bg="#474747" $end /></Row>
                  <Row $h={16} $left={3} $right={4} $bg={lower}><label htmlFor="harmonic">Make Harmonic</label><Check id="harmonic" type="checkbox" /></Row>
                  <Row $h={15} $left={3} $right={4} $bg={lower}><label htmlFor="count">Number of Colors</label><Spacer /><NumberBox $w={69}>#<input id="count" defaultValue="4" /></NumberBox></Row>
                  <Row $h={19} $left={3} $right={4} $gap={2} $bg={lower}>
                    <Palette>{generated.map((k) => <PaletteColor key={k} $color={k} />)}</Palette>
                    <Select label="Generate" value="Generate" $w={71} />
                  </Row>
                  <Well $bg="#343434" />
                </Panel>
                <Panel>
                  <Tabs><Tab $on>Align</Tab></Tabs>
                  <Row $h={28} $left={6}>
                    <AlignName>Alignment</AlignName>
                    <IconButtons names={["alignL", "alignC", "alignR"]} w={12} />
                    <IconButtons names={["alignT", "alignM", "alignB"]} w={13} before={9} />
                  </Row>
                  <Row $h={16} $left={6}>
                    <AlignName>Distribution</AlignName>
                    <IconButtons names={["distH", "distV", "distD"]} w={12} />
                  </Row>
                  <Row $h={8} />
                </Panel>
              </Inspector>
            </Upper>

            <Panel $h={299}>
              <Tabs $h={17}><Tab $on>Scene Window</Tab><Tab>JavaScript Editor</Tab><Tab>Dependency Graph</Tab></Tabs>
              <SceneTitle>Composition 1</SceneTitle>
              <SceneSplit>
                <Layers>
                  <Row $h={17} $left={3} $gap={2} $bg="#3c3c3c">
                    <Search><Icon n="search" s={11} /><input placeholder="Enter a layer name" aria-label="Layer name" /></Search>
                    <MiniButton aria-label="Add layer"><Icon n="plus" s={11} /></MiniButton>
                    <Spacer $w={15} />
                    <MiniButton aria-label="Motion blur"><Icon n="blur" /></MiniButton>
                    <MiniButton aria-label="Effects"><Icon n="spark" /></MiniButton>
                    <MiniButton aria-label="Filters"><Icon n="sliders" s={11} /></MiniButton>
                    <NumberBox $w={70} $h={15}>F<input aria-label="Frame" defaultValue="0" /></NumberBox>
                  </Row>
                  <Row $h={15} $left={2}>
                    {["lock", "eye", "box", "sound", "dropper", "tag"].map((n) => <MiniButton key={n} aria-label={n} $bare><Icon n={n} s={10} /></MiniButton>)}
                    <Spacer $w={30} />Name
                  </Row>
                  <Well>
                    <Empty><Icon n="listHere" s={20} />Use the Create menu to add a layer to your Composition.</Empty>
                    <ScrollY />
                  </Well>
                  <ScrollX $right={10} />
                  <Row $h={17} $left={2}>
                    <MiniButton aria-label="Label"><Icon n="tag" s={11} /></MiniButton>
                    <Spacer />
                    <MiniButton aria-label="Keys"><Icon n="dotbox" s={12} /></MiniButton>
                    <Segments $before={3}>
                      <Segment $on $gap={3}><Icon n="timeBars" s={10} />Time Editor</Segment>
                      <Segment $gap={3}><Icon n="graph" s={9} />Graph Editor</Segment>
                    </Segments>
                  </Row>
                </Layers>
                <Splitter><Grip $h={13} /></Splitter>
                <Timeline>
                  <FrameRuler />
                  <WorkArea><Handle /><Handle /></WorkArea>
                  <Well />
                  <ScrollX />
                  <Row $h={17} $left={2} $right={9} $gap={4}>
                    <WordButton $h={14} $gap={4} $pad={2}><Icon n="keyLayer" s={11} />Default Keyframe Layer</WordButton>
                    <NumberBox $w={52} $h={14}>F<input aria-label="Keyframe" defaultValue="-" /></NumberBox>
                    <span>Align:</span>
                    <IconButtons names={["alignL", "alignC", "alignR"]} w={12} />
                    <MiniButton aria-label="Bounds"><Icon n="bounds" s={11} /></MiniButton>
                    <ToggleButton $w={22} aria-label="Snap"><Icon n="magnet" s={11} /><Icon n="tri" s={6} /></ToggleButton>
                    <ToggleButton $w={22} aria-label="Ripple"><Icon n="ripple" s={11} /><Icon n="tri" s={6} /></ToggleButton>
                    <Spacer />
                    <Icon n="zoomOut" s={11} />
                    <Range type="range" aria-label="Timeline zoom" defaultValue="0" $w={90} $track="#555" />
                    <Icon n="zoomIn" s={11} />
                  </Row>
                  <Playhead />
                  <PlayheadTip />
                </Timeline>
              </SceneSplit>
            </Panel>
          </MainColumn>
        </Workspace>
      </AppWindow>

      <Card>
        <CardHead>
          <svg width="44" height="44" viewBox="0 0 44 44" fill="#eef08c" aria-hidden="true">
            {[4, 22, 40].flatMap((y) => [5, 22, 39].map((x) => <rect key={`${x}-${y}`} x={x - 3} y={y - 4} width="6" height="8" rx="2" />))}
          </svg>
          <CardTitle>Duplicator</CardTitle>
          <Tag>Shape</Tag>
          <Tag>Distribution</Tag>
        </CardHead>
        <CardText>Duplicate and distribute shapes.</CardText>
      </Card>
      <Caption>important to learn. So, in this video,</Caption>
      <Watermark>
        <WatermarkLine><Icon n="diamond" s={12} />first</WatermarkLine>
        <WatermarkLine>keyframe</WatermarkLine>
      </Watermark>
    </Stage>
  );
}
